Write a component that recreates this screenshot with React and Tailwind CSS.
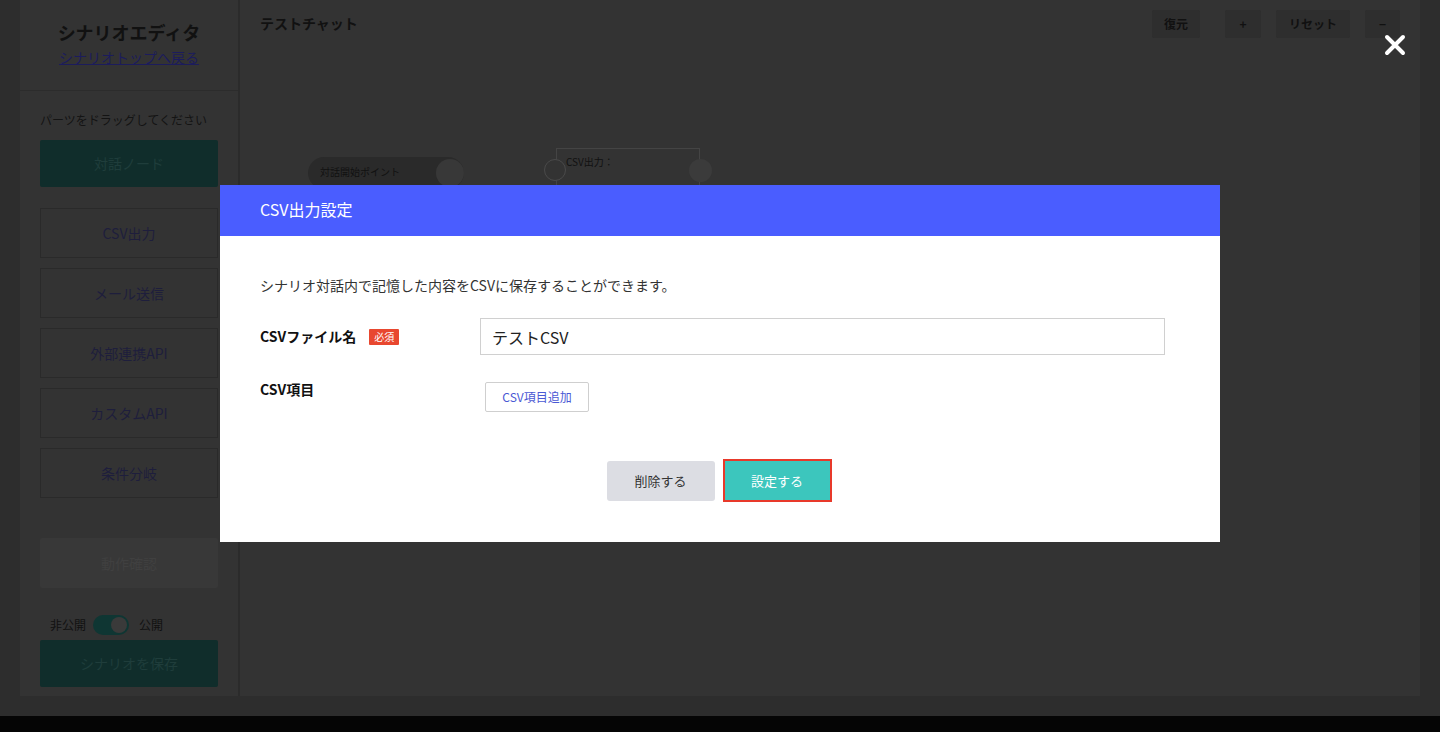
import React from "react";

const font = { fontFamily: '"Noto Sans CJK JP", "Noto Sans", sans-serif' };

function SideBox({ children }) {
  return (
    <div className="h-[50px] border border-[#2a2a2a] flex items-center justify-center text-[14px] text-[#1e1e3c]">
      {children}
    </div>
  );
}

function TopBtn({ children, w }) {
  return (
    <div className={`h-[28px] ${w} bg-[#2e2e2e] rounded-[2px] flex items-center justify-center text-[12px] font-bold text-[#111]`}>
      {children}
    </div>
  );
}

export default function App() {
  return (
    <div className="w-[1440px] h-[732px] bg-[#2d2d2d] flex flex-col overflow-hidden relative" style={font}>
      <div className="h-[716px] flex pl-[20px] pr-[20px] pb-[20px]">
        {/* Sidebar */}
        <div className="w-[218px] bg-[#333333] flex flex-col">
          <div className="h-[91px] border-b border-[#2c2c2c] flex flex-col items-center pt-[18px]">
            <div className="text-[18px] leading-[28px] font-bold text-[#111]">シナリオエディタ</div>
            <div className="text-[14px] leading-[22px] text-[#1c1c5c] underline">シナリオトップへ戻る</div>
          </div>
          <div className="px-[20px] pt-[20px] flex flex-col">
            <div className="text-[12px] leading-[18px] text-[#141414]">パーツをドラッグしてください</div>
            <div className="mt-[11px] h-[47px] bg-[#102d2b] rounded-[2px] flex items-center justify-center text-[14px] text-[#1f3d3b]">
              対話ノード
            </div>
            <div className="mt-[21px] flex flex-col gap-[10px]">
              <SideBox>CSV出力</SideBox>
              <SideBox>メール送信</SideBox>
              <SideBox>外部連携API</SideBox>
              <SideBox>カスタムAPI</SideBox>
              <SideBox>条件分岐</SideBox>
            </div>
            <div className="mt-[40px] h-[50px] bg-[#383838] rounded-[2px] flex items-center justify-center text-[14px] text-[#404040]">
              動作確認
            </div>
            <div className="mt-[26px] h-[22px] flex items-center pl-[10px] text-[12px] text-[#111]">
              <span>非公開</span>
              <div className="ml-[7px] w-[36px] h-[20px] rounded-full bg-[#0f3633] relative">
                <div className="absolute right-[2px] top-[2px] w-[16px] h-[16px] rounded-full bg-[#3a3a3a]" />
              </div>
              <span className="ml-[10px]">公開</span>
            </div>
            <div className="mt-[4px] h-[47px] bg-[#102d2b] rounded-[2px] flex items-center justify-center text-[14px] text-[#1f3d3b]">
              シナリオを保存
            </div>
          </div>
        </div>
        <div className="w-[2px] bg-[#2b2b2b]" />
        {/* Canvas */}
        <div className="flex-1 bg-[#333333] relative">
          <div className="flex items-start justify-between pl-[20px] pr-[20px] pt-[10px]">
            <div className="text-[14px] leading-[26px] font-bold text-[#111]">テストチャット</div>
            <div className="flex items-center">
              <TopBtn w="w-[48px]">復元</TopBtn>
              <div className="w-[25px]" />
              <TopBtn w="w-[36px]">+</TopBtn>
              <div className="w-[15px]" />
              <TopBtn w="w-[74px]">リセット</TopBtn>
              <div className="w-[15px]" />
              <TopBtn w="w-[35px]">−</TopBtn>
            </div>
          </div>
          {/* Node 1 */}
          <div className="absolute left-[68px] top-[157px] w-[156px] h-[32px] rounded-full bg-[#2a2a2a] flex items-center pl-[12px] pb-[3px]">
            <span className="text-[10px] text-[#111]">対話開始ポイント</span>
            <div className="absolute right-0 top-[2px] w-[28px] h-[28px] rounded-full bg-[#383838]" />
          </div>
          {/* Node 2 */}
          <div className="absolute left-[316px] top-[148px] w-[144px] h-[44px] border border-[#444] bg-[#333]">
            <div className="absolute left-[9px] top-[5px] text-[10px] text-[#111]">CSV出力：</div>
          </div>
          <div className="absolute left-[304px] top-[159px] w-[22px] h-[22px] rounded-full border border-[#4a4a4a] bg-[#333]" />
          <div className="absolute left-[449px] top-[159px] w-[23px] h-[23px] rounded-full bg-[#3b3b3b]" />
        </div>
      </div>
      <div className="h-[16px] bg-[#050505]" />

      {/* Close button */}
      <div className="absolute left-[1384px] top-[34px] w-[22px] h-[22px]">
        <svg viewBox="0 0 22 22" width="22" height="22">
          <path d="M3 3 L19 19 M19 3 L3 19" stroke="#fff" strokeWidth="4" strokeLinecap="round" />
        </svg>
      </div>

      {/* Modal */}
      <div className="absolute left-[220px] top-[185px] w-[1000px] bg-white">
        <div className="h-[51px] bg-[#4a5dff] flex items-center pl-[40px] pb-[3px] text-[16px] text-white">
          CSV出力設定
        </div>
        <div className="px-[40px] pt-[39px] pb-[40px]">
          <div className="text-[14px] leading-[20px] text-[#333]">
            シナリオ対話内で記憶した内容をCSVに保存することができます。
          </div>
          <div className="mt-[23px] flex items-center">
            <div className="w-[220px] flex items-center">
              <span className="text-[14px] font-bold text-[#111]">CSVファイル名</span>
              <span className="ml-[13px] bg-[#e8472f] text-white text-[10px] leading-[16px] px-[5px] rounded-[1px]">必須</span>
            </div>
            <div className="w-[685px] h-[37px] border border-[#d0d0d0] flex items-center pl-[11px] text-[16px] text-[#222]">
              テストCSV
            </div>
          </div>
          <div className="mt-[25px] flex items-start">
            <div className="w-[225px] text-[14px] font-bold text-[#111] leading-[20px] mt-[-1px]">CSV項目</div>
            <div className="mt-[2px] w-[104px] h-[30px] border border-[#cfcfcf] rounded-[2px] flex items-center justify-center text-[12px] text-[#4a58d4]">
              CSV項目追加
            </div>
          </div>
          <div className="mt-[47px] flex justify-center items-center gap-[8px] pr-[2px]">
            <div className="w-[108px] h-[40px] bg-[#dcdde3] rounded-[3px] flex items-center justify-center text-[13px] text-[#333]">
              削除する
            </div>
            <div className="w-[109px] h-[43px] bg-[#3cc6bd] border-2 border-[#e8392a] flex items-center justify-center text-[13px] text-white">
              設定する
            </div>
          </div>
        </div>
      </div>
    </div>
  );
}
